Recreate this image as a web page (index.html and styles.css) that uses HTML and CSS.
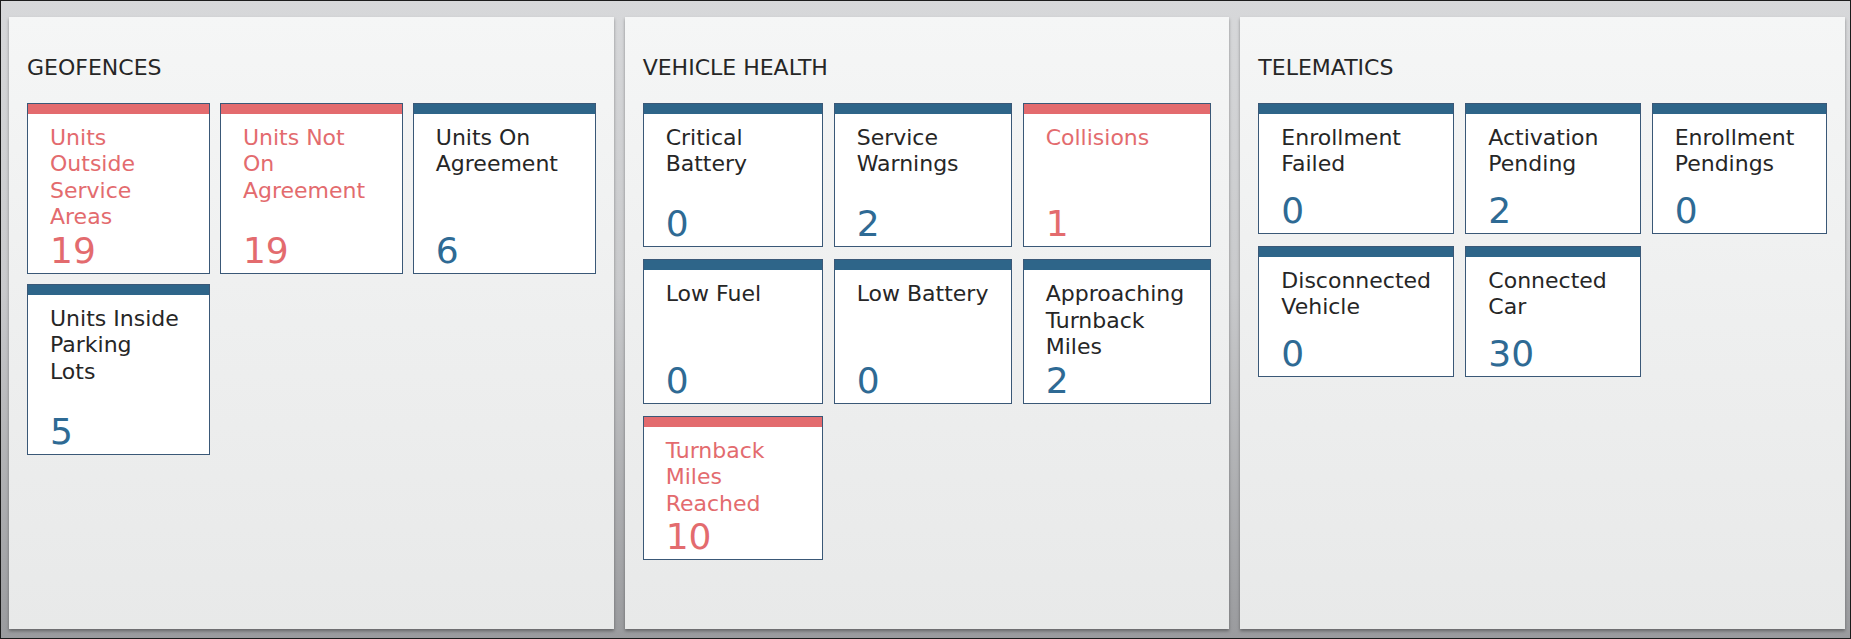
FILE: index.html
```html
<!DOCTYPE html>
<html lang="en">
<head>
    <meta charset="UTF-8">
    <meta name="viewport" content="width=device-width, initial-scale=1.0">
    <title>Fleet Dashboard</title>
    <link rel="stylesheet" href="styles.css">
</head>
<body>
    <div class="screen">

        <!-- Geofences -->
        <section class="panel">
            <h2 class="panel-title">GEOFENCES</h2>
            <div class="tiles tiles-geo">
                <div class="tile alert">
                    <div class="tile-label">Units<br>Outside<br>Service<br>Areas</div>
                    <div class="tile-count">19</div>
                </div>
                <div class="tile alert">
                    <div class="tile-label">Units Not<br>On<br>Agreement</div>
                    <div class="tile-count">19</div>
                </div>
                <div class="tile">
                    <div class="tile-label">Units On<br>Agreement</div>
                    <div class="tile-count">6</div>
                </div>
                <div class="tile">
                    <div class="tile-label">Units Inside<br>Parking<br>Lots</div>
                    <div class="tile-count">5</div>
                </div>
            </div>
        </section>

        <!-- Vehicle health -->
        <section class="panel">
            <h2 class="panel-title">VEHICLE HEALTH</h2>
            <div class="tiles tiles-health">
                <div class="tile">
                    <div class="tile-label">Critical<br>Battery</div>
                    <div class="tile-count">0</div>
                </div>
                <div class="tile">
                    <div class="tile-label">Service<br>Warnings</div>
                    <div class="tile-count">2</div>
                </div>
                <div class="tile alert">
                    <div class="tile-label">Collisions</div>
                    <div class="tile-count">1</div>
                </div>
                <div class="tile">
                    <div class="tile-label">Low Fuel</div>
                    <div class="tile-count">0</div>
                </div>
                <div class="tile">
                    <div class="tile-label">Low Battery</div>
                    <div class="tile-count">0</div>
                </div>
                <div class="tile">
                    <div class="tile-label">Approaching<br>Turnback<br>Miles</div>
                    <div class="tile-count">2</div>
                </div>
                <div class="tile alert">
                    <div class="tile-label">Turnback<br>Miles<br>Reached</div>
                    <div class="tile-count">10</div>
                </div>
            </div>
        </section>

        <!-- Telematics -->
        <section class="panel">
            <h2 class="panel-title">TELEMATICS</h2>
            <div class="tiles tiles-tele">
                <div class="tile">
                    <div class="tile-label">Enrollment<br>Failed</div>
                    <div class="tile-count">0</div>
                </div>
                <div class="tile">
                    <div class="tile-label">Activation<br>Pending</div>
                    <div class="tile-count">2</div>
                </div>
                <div class="tile">
                    <div class="tile-label">Enrollment<br>Pendings</div>
                    <div class="tile-count">0</div>
                </div>
                <div class="tile">
                    <div class="tile-label">Disconnected<br>Vehicle</div>
                    <div class="tile-count">0</div>
                </div>
                <div class="tile">
                    <div class="tile-label">Connected<br>Car</div>
                    <div class="tile-count">30</div>
                </div>
            </div>
        </section>

    </div>
</body>
</html>
```

FILE: styles.css
```css
html, body {
    margin: 0;
    padding: 0;
}

body {
    font-family: "DejaVu Sans", "Liberation Sans", sans-serif;
    color: #222;
}

.screen {
    box-sizing: border-box;
    height: 639px;
    border: 1px solid #1c1c1c;
    padding: 16px 5px 9px 8px;
    display: flex;
    gap: 11px;
    background: linear-gradient(180deg, #d7d8da 0%, #c9cacc 45%, #9a9b9e 100%);
}

.panel {
    flex: 1;
    box-sizing: border-box;
    padding: 38px 18px 0 18px;
    background: linear-gradient(180deg, #f5f6f6 0%, #eeefef 50%, #e8e9e9 100%);
    box-shadow: 0 2px 3px rgba(0, 0, 0, 0.35);
}

.panel-title {
    margin: 0 0 21px 0;
    font-size: 22px;
    line-height: 26.5px;
    font-weight: normal;
    color: #262626;
}

.tiles {
    display: grid;
    gap: 11px;
    grid-auto-rows: 1fr;
}

.tiles-geo {
    grid-template-columns: 1fr 1fr 1fr;
    gap: 10px;
}

.tiles-health {
    grid-template-columns: 180px 178px 1fr;
    gap: 12px 11px;
}

.tiles-tele {
    grid-template-columns: 196px 1fr 1fr;
    gap: 12px 11px;
}

.tile {
    box-sizing: border-box;
    min-height: 131px;
    display: flex;
    flex-direction: column;
    gap: 2px;
    padding: 21px 10px 5px 22px;
    background: #fff;
    border: 1px solid #3a5877;
    box-shadow: inset 0 10px 0 #2e6589;
}

.tile-label {
    font-size: 22px;
    line-height: 26.5px;
    white-space: nowrap;
    color: #262626;
}

.tile-count {
    margin-top: auto;
    font-size: 36px;
    line-height: 35px;
    color: #2e6a94;
}

.tile.alert {
    box-shadow: inset 0 10px 0 #e36b6e;
}

.tile.alert .tile-label,
.tile.alert .tile-count {
    color: #e36b6e;
}
```
